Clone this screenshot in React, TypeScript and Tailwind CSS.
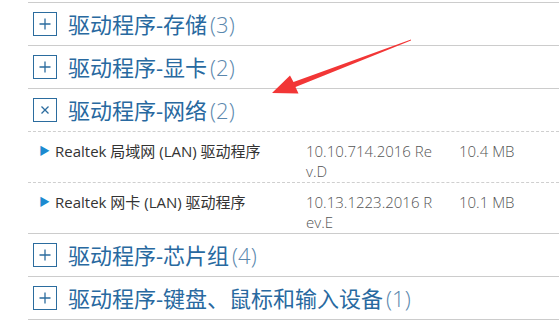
import { type ReactNode } from "react";

type Item = { name: string; version: string[]; size: string };

const ROWS: { title: string; count: number; open?: boolean; items?: Item[] }[] = [
  { title: "驱动程序-存储", count: 3 },
  { title: "驱动程序-显卡", count: 2 },
  {
    title: "驱动程序-网络",
    count: 2,
    open: true,
    items: [
      { name: "Realtek 局域网 (LAN) 驱动程序", version: ["10.10.714.2016 Re", "v.D"], size: "10.4 MB" },
      { name: "Realtek 网卡 (LAN) 驱动程序", version: ["10.13.1223.2016 R", "ev.E"], size: "10.1 MB" },
    ],
  },
  { title: "驱动程序-芯片组", count: 4 },
  { title: "驱动程序-键盘、鼠标和输入设备", count: 1 },
];

function ToggleBox({ open }: { open?: boolean }) {
  return (
    <span className="w-6 h-6 border border-[#2b6c9e] flex items-center justify-center shrink-0">
      {open ? (
        <svg width="10" height="10" viewBox="0 0 10 10">
          <path d="M1.5 1.5 L8.5 8.5 M8.5 1.5 L1.5 8.5" stroke="#2b6c9e" strokeWidth="1.3" />
        </svg>
      ) : (
        <svg width="12" height="12" viewBox="0 0 12 12">
          <path d="M6 0.5 V11.5 M0.5 6 H11.5" stroke="#2b6c9e" strokeWidth="1.3" />
        </svg>
      )}
    </span>
  );
}

function Header({ title, count, open }: { title: string; count: number; open?: boolean }) {
  return (
    <div className="h-[42px] flex items-center pl-[5px] gap-[11px]">
      <ToggleBox open={open} />
      <span className="text-[22px] leading-none text-[#2869a0] whitespace-nowrap">
        {title}
        <span className="ml-[3px] text-[#5a87ad] font-light font-['Open_Sans','Noto_Sans_CJK_SC',sans-serif]">({count})</span>
      </span>
    </div>
  );
}

function ItemRow({ item, children }: { item: Item; children?: ReactNode }) {
  return (
    <div className="flex pt-[9px] h-[51px] border-t border-dashed border-[#cfcfcf] text-[15px] leading-[20px]">
      <div className="w-[278px] flex items-start pl-[11px]">
        <span className="text-[#1c8ad0] text-[11px] leading-[20px] mr-[5px]">▶</span>
        <span className="text-[#333]">{item.name}</span>
      </div>
      <div className="w-[153px] text-[#555] font-light">
        {item.version[0]}
        <br />
        {item.version[1]}
      </div>
      <div className="text-[#555] font-light">{item.size}</div>
      {children}
    </div>
  );
}

export default function App() {
  return (
    <div className="relative w-[559px] h-[325px] bg-white overflow-hidden font-['Open_Sans','Noto_Sans_CJK_SC',sans-serif]">
      <div className="ml-[28px] mt-[2px] border-t border-[#cccccc]">
        {ROWS.map((r) => (
          <div key={r.title} className="border-b border-[#cccccc]">
            <Header title={r.title} count={r.count} open={r.open} />
            {r.items?.map((it) => <ItemRow key={it.name} item={it} />)}
          </div>
        ))}
      </div>

      {/* red annotation arrow */}
      <svg className="absolute left-0 top-0 pointer-events-none" width="559" height="325">
        <polygon
          points="411,39.5 293.5,82 290,75.5 272,93 298.5,93.5 295.5,87 411,40.5"
          fill="#f23636"
        />
      </svg>
    </div>
  );
}
